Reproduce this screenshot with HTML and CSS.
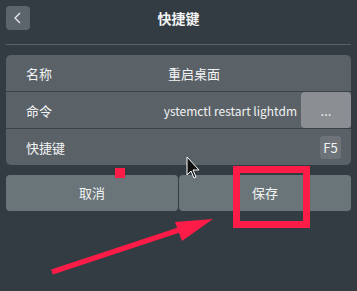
FILE: index.html
```html
<!DOCTYPE html>
<html lang="zh">
<head>
    <meta charset="UTF-8">
    <title>快捷键</title>
    <link rel="stylesheet" href="styles.css">
</head>
<body>
    <div class="page">
        <div class="header">
            <div class="back">
                <svg width="24" height="24" viewBox="0 0 24 24"><path d="M14 7 L9 12 L14 17" fill="none" stroke="#e8eaeb" stroke-width="1.3"/></svg>
            </div>
            <div class="title">快捷键</div>
        </div>
        <div class="line"></div>

        <div class="card">
            <div class="row">
                <div class="label">名称</div>
                <div class="value">重启桌面</div>
            </div>
            <div class="row">
                <div class="label">命令</div>
                <div class="cmd">ystemctl restart lightdm</div>
                <div class="more">...</div>
            </div>
            <div class="row">
                <div class="label">快捷键</div>
                <div class="key">F5</div>
            </div>
        </div>

        <div class="actions">
            <div class="btn">取消</div>
            <div class="btn save">保存</div>
        </div>
    </div>

    <!-- annotations drawn over the screenshot -->
    <div class="dot"></div>
    <div class="box"></div>
    <svg class="arrow" width="357" height="291" viewBox="0 0 357 291">
        <line x1="52" y1="272" x2="182" y2="229" stroke="#fc1c47" stroke-width="5.5"/>
        <polygon points="213,219 175,222 182,241" fill="#fc1c47"/>
    </svg>
    <svg class="cursor" width="16" height="24" viewBox="0 0 16 24">
        <path d="M1 1 L1 19 L5 15 L8 22 L10 21 L7 14 L13 14 Z" fill="#111" stroke="#fff" stroke-width="1"/>
    </svg>
</body>
</html>
```
FILE: styles.css
```css
body { margin: 0; background-color: #333c42; font-family: "Noto Sans CJK SC", "Noto Sans", sans-serif; color: #f2f3f3; width: 357px; height: 291px; overflow: hidden; position: relative; }
.page { padding: 6px; }
.header { display: flex; align-items: center; height: 24px; position: relative; }
.back { width: 24px; height: 24px; background: #5c656b; border-radius: 4px; }
.back svg { display: block; }
.title { position: absolute; left: 0; right: 0; text-align: center; font-size: 14px; font-weight: bold; line-height: 24px; pointer-events: none; }
.line { height: 1px; background: #5a6267; margin-top: 14px; }
.card { margin-top: 10px; background: #5a6167; border-radius: 5px; overflow: hidden; }
.row { display: flex; align-items: center; height: 36px; font-size: 13px; border-top: 1px solid #3a4247; }
.row:first-child { border-top: none; }
.label { width: 142px; padding-left: 20px; min-width: 0; }
.value { flex: 1; }
.cmd { flex: none; margin-left: auto; padding-right: 4px; white-space: nowrap; font-size: 12px; }
.more { flex-shrink: 0; width: 50px; height: 36px; line-height: 38px; text-align: center; background: #8b8e92; border-radius: 4px; font-size: 13px; }
.key { margin-left: auto; margin-right: 10px; width: 21px; height: 23px; line-height: 23px; text-align: center; background: #6d7378; border-radius: 3px; font-size: 13px; }
.actions { display: flex; gap: 1px; margin-top: 10px; }
.btn { flex: 1; height: 36px; line-height: 36px; text-align: center; background: #6a757a; border-radius: 4px; font-size: 13px; }
.dot { position: absolute; left: 115px; top: 168px; width: 10px; height: 10px; background: #fc1c47; }
.box { position: absolute; left: 233px; top: 166px; width: 63px; height: 48px; border: 7px solid #fc1c47; }
.arrow { position: absolute; left: 0; top: 0; }
.cursor { position: absolute; left: 186px; top: 156px; }
```
